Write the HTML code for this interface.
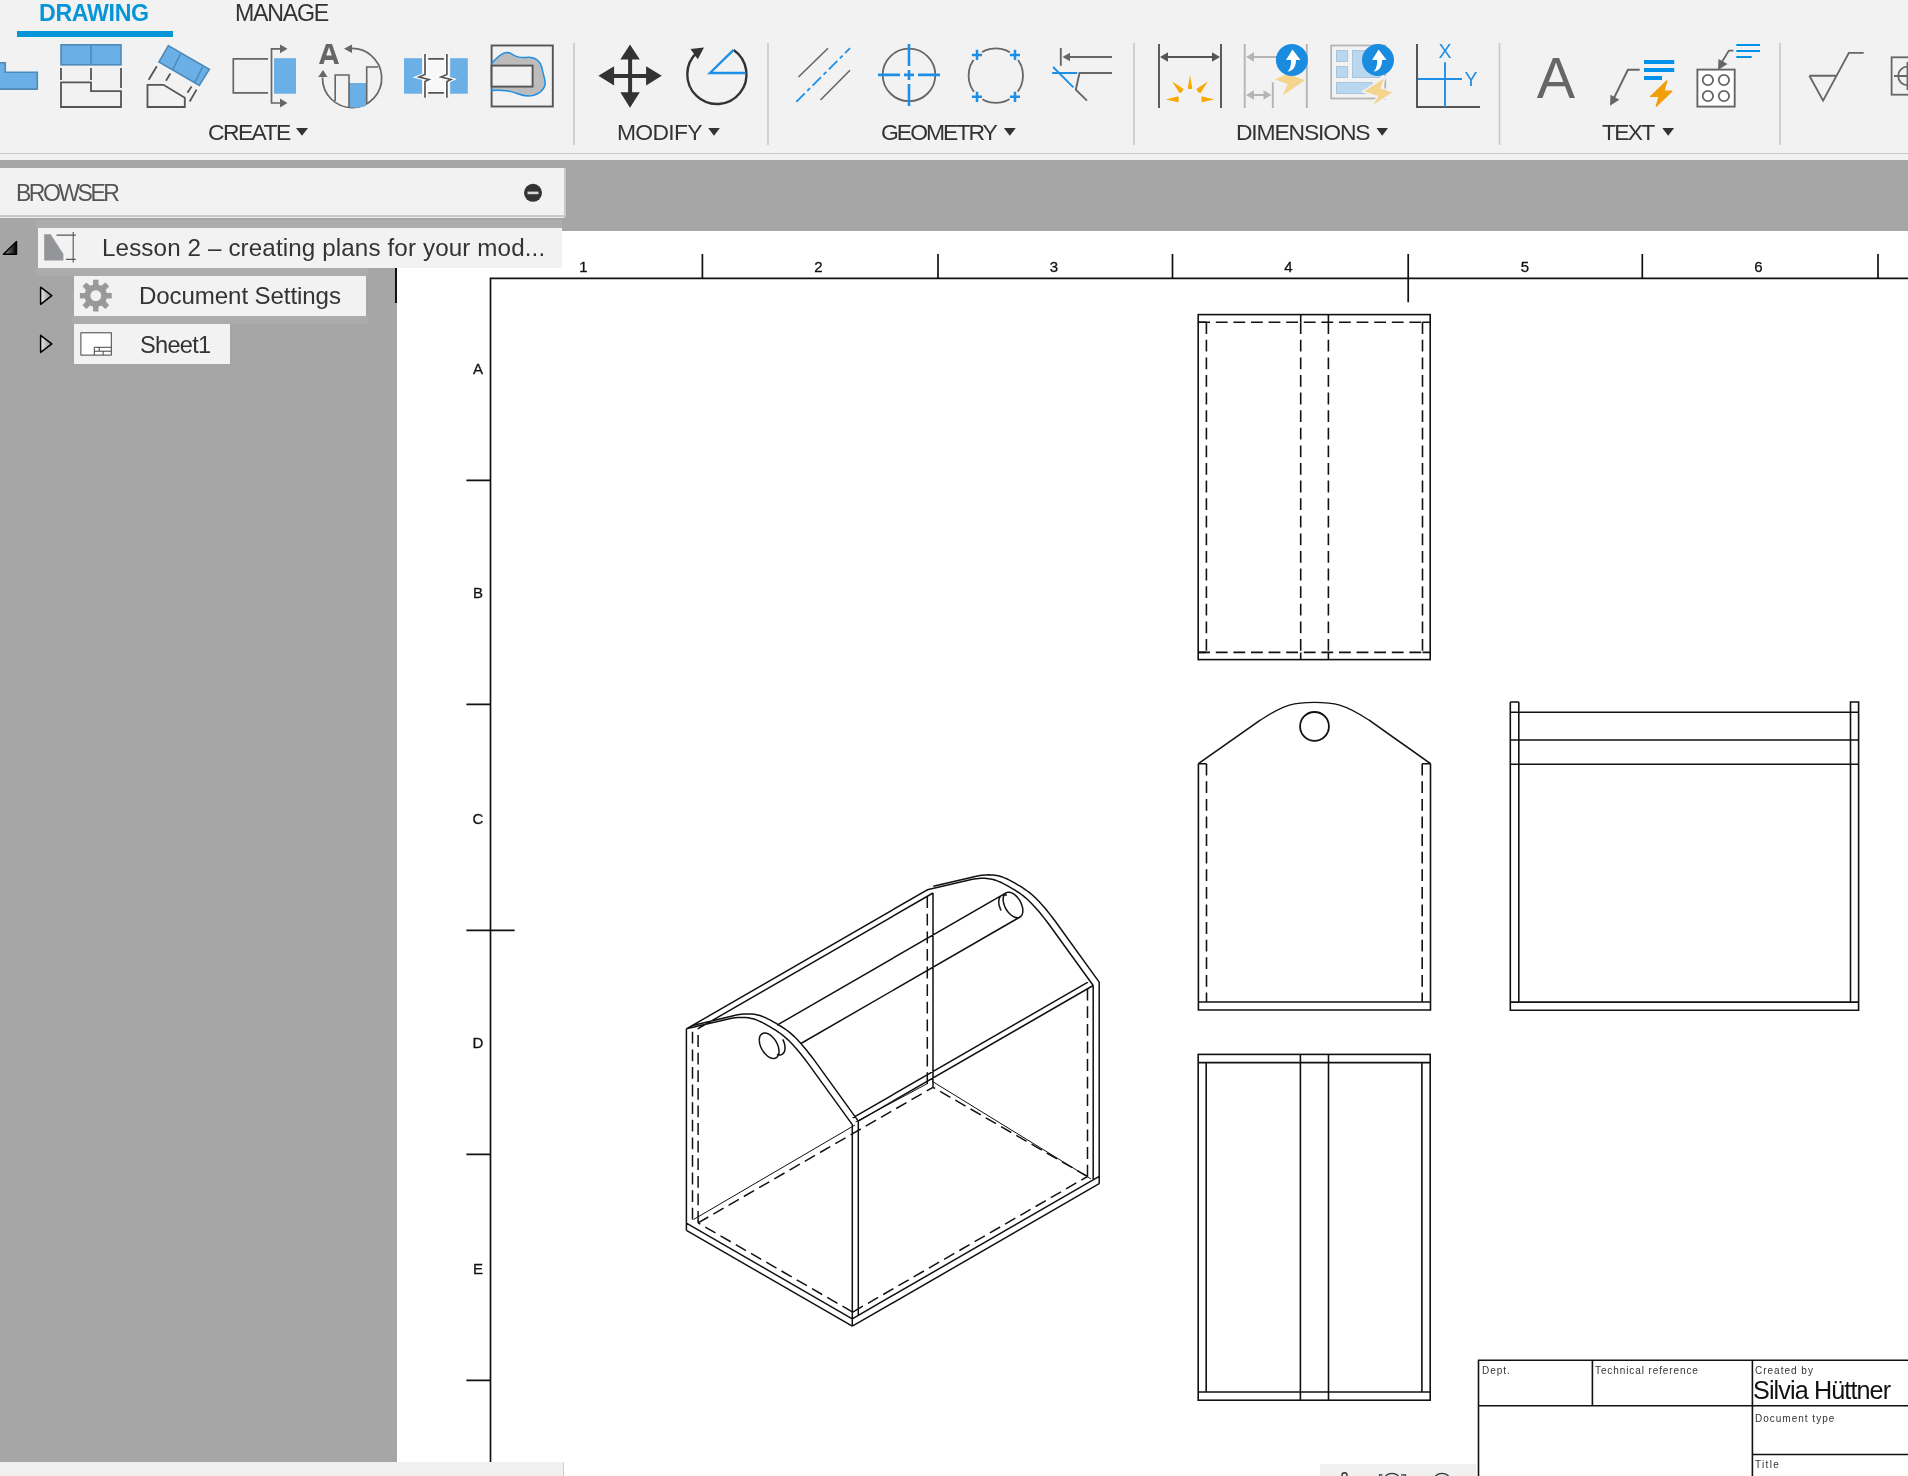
<!DOCTYPE html>
<html><head><meta charset="utf-8">
<style>
html,body{margin:0;padding:0;}
body{width:1908px;height:1476px;overflow:hidden;position:relative;background:#fff;font-family:"Liberation Sans",sans-serif;}
.a{position:absolute;}
.t{position:absolute;white-space:pre;line-height:1;will-change:transform;}
svg{position:absolute;left:0;top:0;overflow:visible;will-change:transform;}
</style></head><body>
<!-- toolbar -->
<div class="a" style="left:0;top:0;width:1908px;height:160px;background:#f2f2f2"></div>
<div class="a" style="left:0;top:153px;width:1908px;height:1.2px;background:#c8c8c8"></div>
<!-- gray band -->
<div class="a" style="left:0;top:160px;width:1908px;height:71px;background:#a6a6a6"></div>
<!-- left gray panel -->
<div class="a" style="left:0;top:231px;width:397px;height:1231px;background:#a6a6a6"></div>

<!-- DRAWING SVG -->
<svg id="dwg" width="1908" height="1476" viewBox="0 0 1908 1476">
 <g stroke="#111" stroke-width="1.7" fill="none">
  <!-- frame -->
  <path d="M490.5,1476 V278.3 H1908"/>
  <path d="M702.4,254 V278.3 M938,254 V278.3 M1172.5,254 V278.3 M1408.2,254 V302.3 M1642.3,254 V278.3 M1878,254 V278.3"/>
  <path d="M466.4,480.4 H490.5 M466.4,704.4 H490.5 M466.4,930.4 H514.6 M466.4,1154.4 H490.5 M466.4,1380.4 H490.5"/>
 </g>
 <g font-family="Liberation Sans" font-size="15" fill="#111" text-anchor="middle" stroke="#111" stroke-width="0.3">
  <text x="583.5" y="271.6">1</text><text x="818.5" y="271.6">2</text><text x="1054" y="271.6">3</text><text x="1288.5" y="271.6">4</text><text x="1525" y="271.6">5</text><text x="1758.5" y="271.6">6</text>
  <text x="478" y="373.6">A</text><text x="478" y="597.6">B</text><text x="478" y="823.6">C</text><text x="478" y="1047.6">D</text><text x="478" y="1273.6">E</text>
 </g>
 <g stroke="#111" stroke-width="1.6" fill="none">
  <!-- view 1 top -->
  <rect x="1198.2" y="314.6" width="232" height="345"/>
  <path d="M1198.2,322.2 H1206.4 M1422.5,322.2 H1430.2 M1198.2,652.4 H1206.4 M1422.5,652.4 H1430.2 M1300.7,314.6 V322.2 M1328.4,314.6 V322.2 M1300.7,652.4 V659.6 M1328.4,652.4 V659.6"/>
  <path d="M1198.2,322.2 H1422.5 M1198.2,652.4 H1422.5 M1206.4,322.2 V652.4 M1422.5,322.2 V652.4 M1300.7,322.2 V652.4 M1328.4,322.2 V652.4" stroke-dasharray="11.8,5.8"/>
  <!-- view 2 front -->
  <path d="M1198.4,763.7 V1010 H1430.5 V763.7 M1198.4,1002 H1430.5 M1198.4,763.7 H1206.5 M1422.2,763.7 H1430.5"/>
  <path d="M1198.4,763.7 L1260.6,719.9 M1368.8,719.9 L1430.5,763.7"/><path d="M1260.6,719.9 C1285,704 1295,702.3 1314.5,702.3 C1334,702.3 1344,704 1368.8,719.9" stroke-width="1.2"/>
  <path d="M1206.5,763.7 V1002 M1422.2,763.7 V1002" stroke-dasharray="11.8,5.8"/>
  <circle cx="1314.5" cy="726.4" r="14.4" stroke-width="1.8"/>
  <!-- view 3 side -->
  <path d="M1510.3,702 V1010.2 H1858.6 V702 H1850.5 V1002 M1518.8,702 V1002 M1510.3,702 H1518.8 M1518.8,712.3 H1850.5 M1510.3,740 H1858.6 M1510.3,764.2 H1858.6 M1510.3,1002.1 H1858.6 M1510.3,712.3 H1518.8 M1850.5,712.3 H1858.6"/>
  <!-- view 4 bottom -->
  <rect x="1198.2" y="1054.4" width="232" height="345.8"/>
  <path d="M1198.2,1062.6 H1430.2 M1198.2,1392 H1430.2 M1206.2,1062.6 V1392 M1421.9,1062.6 V1392 M1300.4,1054.4 V1400.2 M1328.5,1054.4 V1400.2"/>
  <!-- title block -->
  <path d="M1478.5,1476 V1360.3 H1908 M1478.5,1405.8 H1908 M1592.4,1360.3 V1405.8 M1752.4,1360.3 V1476 M1752.4,1454.5 H1908"/>
 </g>
 <g font-family="Liberation Sans" font-size="10" fill="#333">
  <text x="1482" y="1374" letter-spacing="1.0">Dept.</text>
  <text x="1595" y="1374" letter-spacing="0.9">Technical reference</text>
  <text x="1755" y="1374" letter-spacing="1.0">Created by</text>
  <text x="1755" y="1422" letter-spacing="1.0">Document type</text>
  <text x="1755" y="1468" letter-spacing="1.3">Title</text>
 </g>
 <text x="1753" y="1399.4" font-family="Liberation Sans" font-size="25.2" letter-spacing="-0.9" fill="#111">Silvia Hüttner</text>
 <g id="iso" stroke="#111" stroke-width="1.5" fill="none">
<path stroke-width="1" d="M855.6,1122 L927,1083.8 M932,1081.2 L1090.8,1178.8 M693.5,1219.5 L855,1125"/>
<path d="M852.3,1326.2L686.4,1230.4M852.3,1326.2L1099.2,1183.7M852.3,1318.8L686.4,1223.1M852.3,1318.8L1099.2,1176.3M686.4,1230.4L686.4,1028.8M852.3,1326.2L852.3,1124.6M1099.2,1183.7L1099.2,982.1M858.3,1315.4L858.3,1121.1M1093.2,1179.8L1093.2,985.5M852.3,1124.6L807.8,1063.1L805.3,1059.7L802.9,1056.7L800.6,1053.8L798.5,1051.2L796.4,1048.7L794.4,1046.5L792.6,1044.4L790.7,1042.5L789.0,1040.8L787.2,1039.1L785.5,1037.6L783.9,1036.2L782.2,1034.8L780.5,1033.5L778.7,1032.3L777.0,1031.1L775.2,1029.9L773.3,1028.8L771.3,1027.6L769.3,1026.4L767.3,1025.3L765.3,1024.2L763.4,1023.2L761.6,1022.2L759.8,1021.4L758.1,1020.6L756.4,1019.9L754.7,1019.3L753.0,1018.8L751.3,1018.4L749.6,1018.0L747.8,1017.7L745.9,1017.5L744.0,1017.4L742.1,1017.4L740.0,1017.4L737.8,1017.5L735.5,1017.7L733.1,1018.0L730.5,1018.4L686.4,1028.8M858.3,1121.1L813.9,1059.6L811.3,1056.3L808.9,1053.2L806.6,1050.3L804.5,1047.7L802.4,1045.3L800.5,1043.0L798.6,1041.0L796.8,1039.0L795.0,1037.3L793.3,1035.6L791.6,1034.1L789.9,1032.7L788.2,1031.3L786.5,1030.0L784.8,1028.8L783.0,1027.6L781.2,1026.5L779.3,1025.3L777.4,1024.1L775.3,1022.9L773.3,1021.8L771.3,1020.7L769.4,1019.7L767.6,1018.8L765.9,1017.9L764.1,1017.1L762.4,1016.5L760.7,1015.8L759.0,1015.3L757.3,1014.9L755.6,1014.5L753.8,1014.2L752.0,1014.0L750.1,1013.9L748.1,1013.9L746.0,1013.9L743.8,1014.1L741.5,1014.3L739.1,1014.6L736.5,1014.9L692.5,1025.4M1093.2,985.5L1048.7,924.0L1046.2,920.7L1043.8,917.6L1041.5,914.7L1039.3,912.1L1037.3,909.7L1035.3,907.4L1033.4,905.4L1031.6,903.5L1029.8,901.7L1028.1,900.0L1026.4,898.5L1024.7,897.1L1023.0,895.7L1021.3,894.5L1019.6,893.2L1017.8,892.0L1016.0,890.9L1014.2,889.7L1012.2,888.6L1010.2,887.4L1008.1,886.2L1006.2,885.1L1004.3,884.1L1002.5,883.2L1000.7,882.3L999.0,881.6L997.3,880.9L995.6,880.3L993.9,879.7L992.2,879.3L990.4,878.9L988.6,878.7L986.8,878.5L984.9,878.3L982.9,878.3L980.8,878.3L978.7,878.5L976.4,878.7L973.9,879.0L971.3,879.4L927.3,889.8M1099.2,982.1L1054.7,920.5L1052.2,917.2L1049.8,914.1L1047.5,911.3L1045.4,908.6L1043.3,906.2L1041.3,904.0L1039.5,901.9L1037.6,900.0L1035.9,898.2L1034.1,896.6L1032.4,895.0L1030.7,893.6L1029.1,892.3L1027.4,891.0L1025.6,889.8L1023.9,888.6L1022.1,887.4L1020.2,886.2L1018.2,885.1L1016.2,883.9L1014.1,882.7L1012.2,881.6L1010.3,880.6L1008.5,879.7L1006.7,878.8L1005.0,878.1L1003.3,877.4L1001.6,876.8L999.9,876.3L998.2,875.8L996.5,875.5L994.7,875.2L992.8,875.0L990.9,874.9L988.9,874.8L986.9,874.9L984.7,875.0L982.4,875.2L979.9,875.5L977.4,875.9L933.3,886.3M858.3,1121.1L1093.2,985.5M852.7,1117.9L1087.5,982.3M686.4,1028.8L927.3,889.8M698.1,1028.6L933.0,893.0M933.0,1087.3L933.0,893.0M759.3,1040.1L759.4,1038.6L759.6,1037.3L760.0,1036.1L760.6,1035.1L761.3,1034.3L762.2,1033.7L763.2,1033.3L764.2,1033.0L765.4,1033.1L766.6,1033.3L767.9,1033.7L769.2,1034.4L770.4,1035.2L771.7,1036.2L772.9,1037.4L774.1,1038.7L775.1,1040.2L776.1,1041.7L777.0,1043.3L777.7,1045.0L778.3,1046.6L778.7,1048.3L778.9,1049.9L779.0,1051.4L778.9,1052.9L778.7,1054.2L778.3,1055.3L777.7,1056.4L777.0,1057.2L776.1,1057.8L775.1,1058.2L774.1,1058.4L772.9,1058.4L771.7,1058.2L770.4,1057.8L769.2,1057.1L767.9,1056.3L766.6,1055.3L765.4,1054.1L764.2,1052.7L763.2,1051.3L762.2,1049.8L761.3,1048.2L760.6,1046.5L760.0,1044.8L759.6,1043.2L759.4,1041.6L759.3,1040.1M782.7,1039.3L783.5,1040.9L784.1,1042.6L784.6,1044.3L784.9,1045.9L785.0,1047.4L785.0,1048.9L784.8,1050.3L784.4,1051.5L783.9,1052.6L783.2,1053.4L782.4,1054.1L781.5,1054.6L780.5,1054.9L779.3,1055.0L778.1,1054.8L776.9,1054.5M1001.1,910.5L1000.3,908.8L999.7,907.1L999.2,905.5L998.9,903.9L998.8,902.3L998.8,900.8L999.0,899.5L999.3,898.3L999.9,897.2L1000.5,896.3L1001.3,895.6L1002.3,895.1L1003.3,894.8L1004.4,894.8L1005.6,894.9L1006.9,895.3M1003.1,899.3L1003.2,897.8L1003.5,896.5L1003.9,895.3L1004.5,894.3L1005.2,893.5L1006.0,892.9L1007.0,892.5L1008.1,892.3L1009.2,892.3L1010.4,892.5L1011.7,892.9L1013.0,893.6L1014.3,894.4L1015.5,895.4L1016.8,896.6L1017.9,897.9L1019.0,899.4L1020.0,900.9L1020.8,902.5L1021.5,904.2L1022.1,905.9L1022.5,907.5L1022.8,909.1L1022.8,910.6L1022.8,912.1L1022.5,913.4L1022.1,914.6L1021.5,915.6L1020.8,916.4L1020.0,917.0L1019.0,917.4L1017.9,917.7L1016.8,917.6L1015.5,917.4L1014.3,917.0L1013.0,916.3L1011.7,915.5L1010.4,914.5L1009.2,913.3L1008.1,912.0L1007.0,910.5L1006.0,909.0L1005.2,907.4L1004.5,905.7L1003.9,904.1L1003.5,902.4L1003.2,900.8L1003.1,899.3M777.1,1025.1L1006.0,892.9M800.9,1043.5L1020.0,917.0"/>
<path stroke-dasharray="11.8,5.8" d="M927.3,1084.0L927.3,889.8M692.5,1219.6L692.5,1025.4M698.1,1222.9L698.1,1028.6M1087.5,1176.5L1087.5,982.3M852.7,1312.1L1087.5,1176.5M852.7,1312.1L698.1,1222.9M1087.5,1176.5L933.0,1087.3M698.1,1222.9L933.0,1087.3"/>
</g>
</svg>

<!-- browser header -->
<div class="a" style="left:0;top:168px;width:564px;height:47px;background:#f2f2f2;border-right:2px solid #c8c8c8;border-bottom:2px solid #c8c8c8"></div>
<div class="a" style="left:0;top:217px;width:564px;height:1px;background:#ececec"></div>
<div class="a" style="left:36px;top:219.5px;width:526px;height:8.5px;background:#adadad"></div>

<!-- browser rows -->
<div class="a" style="left:36px;top:267.7px;width:332px;height:8.3px;background:#acacac"></div>
<div class="a" style="left:72px;top:315.6px;width:296px;height:8.6px;background:#acacac"></div>
<div class="a" style="left:38px;top:228px;width:524px;height:39.7px;background:#f2f2f2"></div>
<div class="a" style="left:73.7px;top:276px;width:292px;height:39.6px;background:#f2f2f2"></div>
<div class="a" style="left:73.7px;top:324.2px;width:156px;height:39.8px;background:#f2f2f2"></div>
<div class="a" style="left:395.2px;top:268px;width:1.8px;height:35px;background:#111"></div>
<svg width="600" height="400" viewBox="0 0 600 400">
 <defs>
  <linearGradient id="gTri" x1="0" x2="1" y1="0" y2="0"><stop offset="0" stop-color="#9a9a9a"/><stop offset="1" stop-color="#000"/></linearGradient>
  <linearGradient id="gExp" x1="0" x2="1" y1="0" y2="0"><stop offset="0" stop-color="#e8e8e8"/><stop offset="1" stop-color="#8a8a8a"/></linearGradient>
 </defs>
 <circle cx="533" cy="192.8" r="9" fill="#333"/>
 <rect x="527.5" y="191.6" width="11" height="2.6" fill="#d8d8d8"/>
 <path d="M3.4,254.3 L16.5,241.5 L16.5,254.3 Z" fill="url(#gTri)" stroke="#000" stroke-width="1.4" stroke-linejoin="round"/>
 <path d="M44.2,234.3 L50.6,234.3 L63.4,254 L63.4,260.4 L44.2,260.4 Z" fill="#939598"/>
 <path d="M56.5,235.1 H75.8 M66,259.4 H75.8 M73.2,232 V262.5" stroke="#555" stroke-width="1.1" fill="none"/>
 <path d="M40.6,287.2 L51.8,295.6 L40.6,304.3 Z" fill="url(#gExp)" stroke="#000" stroke-width="1.5" stroke-linejoin="round"/>
 <path d="M40.6,335.3 L51.8,343.8 L40.6,352.4 Z" fill="url(#gExp)" stroke="#000" stroke-width="1.5" stroke-linejoin="round"/>
 <g transform="translate(95.8,295.7)" fill="#999">
  <path id="gear" d="M-2.7,-15.9 H2.7 V-11 L5.6,-9.9 L9.5,-13.3 L13.3,-9.5 L9.9,-5.6 L11,-2.7 H15.9 V2.7 H11 L9.9,5.6 L13.3,9.5 L9.5,13.3 L5.6,9.9 L2.7,11 V15.9 H-2.7 V11 L-5.6,9.9 L-9.5,13.3 L-13.3,9.5 L-9.9,5.6 L-11,2.7 H-15.9 V-2.7 H-11 L-9.9,-5.6 L-13.3,-9.5 L-9.5,-13.3 L-5.6,-9.9 L-2.7,-11 Z M0,-5.4 A5.4,5.4 0 1,0 0.01,-5.4 Z" fill-rule="evenodd"/>
 </g>
 <rect x="80.9" y="332.8" width="30.4" height="22.3" fill="#fff" stroke="#444" stroke-width="1"/>
 <path d="M94.3,355.1 V347.3 H111.3 M94.3,351.2 H111.3 M99.2,347.3 V351.2 M103.1,351.2 V355.1" stroke="#444" stroke-width="1" fill="none"/>
</svg>
<!-- toolbar icons -->
<svg width="1908" height="160" viewBox="0 0 1908 160">
 <g stroke-linecap="butt" fill="none">
 <!-- separators -->
 <path d="M574,43 V145 M768,43 V145 M1134,43 V145 M1499.5,43 V145 M1780,43 V145" stroke="#c8c8c8" stroke-width="1.6"/>
 <!-- icon1 partial L -->
 <path d="M-2,62.8 H5.3 V72.2 H37.3 V89.1 H-2 Z" fill="#6aafe6" stroke="#4d8ab8" stroke-width="1.6"/>
 <!-- icon2 base view -->
 <rect x="61" y="44.8" width="60" height="20" fill="#6aafe6" stroke="#4d8ab8" stroke-width="1.6"/>
 <path d="M91,44.8 V64.8" stroke="#4d8ab8" stroke-width="1.6"/>
 <path d="M61,68 V80 M91,68 V80 M121,68 V88" stroke="#555" stroke-width="1.8"/>
 <path d="M61,82.4 H91 V91.2 H121 V107 H61 Z" stroke="#555" stroke-width="1.8"/>
 <!-- icon3 projected view -->
 <path d="M168.4,45.6 L209.3,69.4 L199.3,85.4 L158.9,62 Z" fill="#6aafe6" stroke="#4d8ab8" stroke-width="1.6"/>
 <path d="M180.4,54.2 L172.8,69.5 M202.6,66.8 L194.8,82.6" stroke="#4d8ab8" stroke-width="1.5"/>
 <path d="M156.8,66.2 L148.7,79.8 M170.4,73.5 L166,80.7 M191.6,86.5 L187.4,92.7 M196.6,89.6 L189.7,101.5" stroke="#555" stroke-width="1.8"/>
 <path d="M147.5,84.8 H163.5 L184.8,97.8 V107 H147.5 Z" stroke="#555" stroke-width="1.8"/>
 <!-- icon4 section view -->
 <path d="M268,58.8 H233.3 V92.8 H268" stroke="#666" stroke-width="1.7"/>
 <path d="M281,48.8 H271.5 V103 H281" stroke="#666" stroke-width="1.7"/>
 <path d="M280,44.4 L287.5,48.8 L280,53.2 Z M280,98.6 L287.5,103 L280,107.4 Z" fill="#666"/>
 <rect x="274" y="58.2" width="22" height="35.5" fill="#6aafe6"/>
 <!-- icon5 detail view -->
 <path d="M319,64 L326,44 H332 L339,64 H334.5 L333.2,60 H324.8 L323.5,64 Z M326.2,55.6 H331.8 L329,47 Z" fill="#666" fill-rule="evenodd"/>
 <path d="M322.5,77.5 A29.6,29.6 0 1,0 349.2,48.6" stroke="#666" stroke-width="1.7"/>
 <path d="M344,48.7 L352,44.5 V53 Z" fill="#666"/>
 <path d="M318.2,77 L323,70 L327.5,77 Z" fill="#666"/>
 <path d="M349,100 V83 H366 V106 Q357,109 349,107 Z" fill="#6aafe6"/>
 <path d="M335.2,101 V75 H349 V107.5 M366.7,104 V67 H378" stroke="#666" stroke-width="1.6"/>
 <!-- icon6 break view -->
 <rect x="404" y="58.2" width="18" height="35.5" fill="#6aafe6"/>
 <rect x="450.2" y="58.2" width="17.6" height="35.5" fill="#6aafe6"/>
 <rect x="425" y="58.2" width="22" height="35.5" fill="#f8f8f8"/>
 <path d="M425,54 V74.5 L419,77 L429,79.5 L425,81.5 V97.8 M446.9,54 V74.5 L441,77 L451,79.5 L446.9,81.5 V97.8" stroke="#fff" stroke-width="4"/>
 <path d="M425,54 V74.5 L419,77 L429,79.5 L425,81.5 V97.8 M446.9,54 V74.5 L441,77 L451,79.5 L446.9,81.5 V97.8" stroke="#555" stroke-width="1.7"/>
 <path d="M428.2,58.8 H443.9 M428.2,92.9 H443.9" stroke="#555" stroke-width="1.7"/>
 <!-- icon7 crop -->
 <rect x="491.6" y="45.5" width="61.2" height="61" stroke="#555" stroke-width="1.9"/>
 <path d="M492,63 C500,54 506,51 510,53 C515,56 518,58 526,57.5 C534,56.5 540,60 542,68 C543,75 546,80 545,85 C543,92 536,96 528,96 C520,96 516,92 508,91 C502,90 497,90 492,90.5 Z" fill="#bcbcbc" stroke="#1e8fe6" stroke-width="1.5"/>
 <rect x="491.6" y="65.6" width="41" height="21" fill="#f2f2f2" stroke="#555" stroke-width="1.9"/>
 <!-- move -->
 <path d="M630,44.5 L639.8,59.6 H632.1 V73.9 H646.1 V66.2 L661.8,75.8 L646.1,85.6 V77.9 H632.1 V92.2 H639.8 L630,107.8 L620.3,92.2 H628.1 V77.9 H614.1 V85.6 L598.4,75.8 L614.1,66.2 V73.9 H628.1 V59.6 H620.3 Z" fill="#333"/>
 <!-- rotate -->
 <path d="M733.6,50 A29.6,29.6 0 1,1 697,52.5" stroke="#333" stroke-width="2.4"/>
 <path d="M690.5,49 L704,47.5 L697.8,59.3 Z" fill="#333"/>
 <path d="M745.6,73 H710 L733.6,49.8" stroke="#1e8fe6" stroke-width="2.4"/>
 <!-- centerline -->
 <path d="M798.5,77 L828,48.3 M820.5,100 L850,70.2" stroke="#666" stroke-width="1.6"/>
 <path d="M796.3,101.8 L850,48.2" stroke="#1e8fe6" stroke-width="1.8" stroke-dasharray="12,3.5,4,3.5"/>
 <!-- center mark -->
 <circle cx="909" cy="74.9" r="26.3" stroke="#666" stroke-width="1.8"/>
 <path d="M878,74.9 H900 M904,74.9 H914 M918,74.9 H940 M909,44 V66 M909,70 V80 M909,84 V106" stroke="#1e8fe6" stroke-width="2.6"/>
 <!-- bolt circle -->
 <circle cx="995.8" cy="75.6" r="27.2" stroke="#666" stroke-width="1.8"/>
 <g fill="#f2f2f2" stroke="none"><circle cx="977" cy="54.9" r="6"/><circle cx="1015" cy="54.9" r="6"/><circle cx="977" cy="96.8" r="6"/><circle cx="1015" cy="96.8" r="6"/></g>
 <path d="M971.9,54.9 H982 M977,49.8 V60 M1009.9,54.9 H1020 M1015,49.8 V60 M971.9,96.8 H982 M977,91.7 V101.9 M1009.9,96.8 H1020 M1015,91.7 V101.9" stroke="#1e8fe6" stroke-width="2.5"/>
 <!-- edge extension -->
 <path d="M1060.8,48 V65.7 M1066,57 H1112 M1112,73 H1079.5 L1075.8,89.8 L1087,100.6" stroke="#666" stroke-width="1.9"/>
 <path d="M1062.5,57 L1070,52.8 V61.2 Z" fill="#666"/>
 <path d="M1052.2,73 H1077.2 M1053.1,67 L1073.4,87.4" stroke="#1e8fe6" stroke-width="1.9"/>
 <!-- dimension -->
 <path d="M1159,44 V108 M1221,44 V108 M1166,57 H1214" stroke="#555" stroke-width="1.9"/>
 <path d="M1160,57 L1168,52.3 V61.7 Z M1220,57 L1212,52.3 V61.7 Z" fill="#555"/>
 <g fill="#f9a800">
  <path d="M1190,75.2 L1192.3,88.5 Q1190,89.5 1187.7,88.5 Z"/>
  <path d="M1172.2,81.5 L1183.6,89 Q1182.5,92.3 1179.6,93.3 Z"/>
  <path d="M1207.8,81.5 L1196.4,89 Q1197.5,92.3 1200.4,93.3 Z"/>
  <path d="M1165.8,99.4 L1178.4,96.3 Q1179,99.4 1178.4,102.2 Z"/>
  <path d="M1214.2,99.4 L1201.6,96.3 Q1201,99.4 1201.6,102.2 Z"/>
 </g>
 <!-- auto dimension -->
 <path d="M1244.7,44 V108 M1306.8,44 V108 M1272.8,82.2 V108 M1250,57 H1280 M1250,95 H1268" stroke="#b4b4b4" stroke-width="1.9"/>
 <path d="M1246,57 L1254,52.3 V61.7 Z M1246,95 L1254,90.3 V99.7 Z M1271.5,95 L1263.5,90.3 V99.7 Z" fill="#b4b4b4"/>
 <path d="M1274.9,79.6 L1287.2,73.7 L1305,80.3 L1282.5,95.4 L1287.6,84.1 Z" fill="#f5d48d"/>
 <circle cx="1291.9" cy="60" r="16" fill="#1a8ce0"/>
 <path d="M1292.5,49.5 L1300.5,60 H1296 C1296,67 1293,71 1287.5,71.5 C1290.5,69 1291,65 1291,60 H1286 Z" fill="#fff"/>
 <!-- baseline dim -->
 <rect x="1331.2" y="45.5" width="54" height="53" stroke="#b4b4b4" stroke-width="1.8"/>
 <g fill="#b9d7ee" stroke="#a9c7de" stroke-width="1"><rect x="1336.5" y="50.5" width="11" height="11"/><rect x="1336.5" y="66.5" width="11" height="11"/><rect x="1352.5" y="50.5" width="27.5" height="27"/><rect x="1336.5" y="82.5" width="35.5" height="11"/></g>
 <path d="M1362.5,91.7 L1385.6,76.6 L1381.3,87.9 L1393.6,92.4 L1370.5,107.5 L1377.5,96.4 Z" fill="#f5d48d" stroke="#f2f2f2" stroke-width="1.5"/>
 <circle cx="1378" cy="60" r="16" fill="#1a8ce0"/>
 <path d="M1378.6,49.5 L1386.6,60 H1382.1 C1382.1,67 1379.1,71 1373.6,71.5 C1376.6,69 1377.1,65 1377.1,60 H1372.1 Z" fill="#fff"/>
 <!-- ordinate -->
 <path d="M1417,44 V107 H1480" stroke="#555" stroke-width="2"/>
 <path d="M1445,62.2 V107 M1418,79 H1462" stroke="#1e8fe6" stroke-width="1.9"/>
 <!-- text A -->
 <!-- leader note -->
 <path d="M1639.7,69.8 H1627.9 L1613,100" stroke="#666" stroke-width="1.9"/>
 <path d="M1610,105.8 L1610.5,94.8 L1619.3,99.8 Z" fill="#666"/>
 <path d="M1644,62 H1674.2 M1644,70 H1674.2 M1644,78 H1662" stroke="#0091ea" stroke-width="3.8"/>
 <path d="M1667,80.8 L1650.6,96.4 H1659 L1656.2,106.3 L1671.8,91.2 H1663.8 Z" fill="#f29e0a" stroke="#f29e0a" stroke-width="1.2" stroke-linejoin="round"/>
 <!-- balloon -->
 <rect x="1697.4" y="69.6" width="37.3" height="37" fill="#fff" stroke="#666" stroke-width="1.9"/>
 <g stroke="#666" stroke-width="1.8"><circle cx="1707.9" cy="80" r="5.2"/><circle cx="1723.9" cy="80" r="5.2"/><circle cx="1707.9" cy="96" r="5.2"/><circle cx="1723.9" cy="96" r="5.2"/></g>
 <path d="M1733.4,50.6 H1728.9 L1721,63.5" stroke="#666" stroke-width="1.8"/>
 <path d="M1718,70 L1718.5,59 L1727.5,64 Z" fill="#666"/>
 <path d="M1736.3,44.9 H1760 M1736.3,50.9 H1760 M1736.3,56.9 H1751.7" stroke="#0091ea" stroke-width="2"/>
 <!-- surface texture -->
 <path d="M1809.4,75.8 H1835.7 M1809.4,75.8 L1823.1,100.6 L1848.9,52.9 H1863.7" stroke="#666" stroke-width="1.9"/>
 <!-- partial icon -->
 <rect x="1891.6" y="57.3" width="30" height="37.4" stroke="#666" stroke-width="1.8"/>
 <circle cx="1907.5" cy="76" r="9.3" stroke="#666" stroke-width="1.8"/>
 <path d="M1894,76 H1920 M1907.5,62 V90" stroke="#666" stroke-width="1.8"/>
 </g>
 <!-- X Y letters -->
 <text x="1445" y="58.2" font-family="Liberation Sans" font-size="19.5" fill="#1e8fe6" text-anchor="middle">X</text>
 <text x="1471" y="86" font-family="Liberation Sans" font-size="19.5" fill="#1e8fe6" text-anchor="middle">Y</text>
 <text x="1556" y="97.8" font-family="Liberation Sans" font-size="57.5" fill="#666" text-anchor="middle">A</text>
 <!-- dropdown triangles -->
 <path d="M296,128 H308 L302,135.7 Z M708.2,128 H719.9 L714,135.7 Z M1003.9,128 H1015.8 L1009.8,135.7 Z M1376.5,128 H1388 L1382.2,135.7 Z M1662.3,128 H1674.1 L1668.2,135.7 Z" fill="#333"/>
</svg>
<!-- tabs -->
<div class="t" style="left:39px;top:1.8px;font-size:23.2px;letter-spacing:-0.33px;font-weight:700;color:#0696d7">DRAWING</div>
<div class="a" style="left:17px;top:31px;width:156px;height:6px;background:#0696d7"></div>
<div class="t" style="left:235px;top:1.8px;font-size:23.2px;letter-spacing:-1.26px;color:#333">MANAGE</div>
<!-- group labels -->
<div class="t" style="left:207.7px;top:121px;font-size:22.9px;letter-spacing:-1.58px;color:#333">CREATE</div>
<div class="t" style="left:616.5px;top:121px;font-size:22.9px;letter-spacing:-0.7px;color:#333">MODIFY</div>
<div class="t" style="left:880.7px;top:121px;font-size:22.9px;letter-spacing:-1.96px;color:#333">GEOMETRY</div>
<div class="t" style="left:1236.1px;top:121px;font-size:22.9px;letter-spacing:-1.16px;color:#333">DIMENSIONS</div>
<div class="t" style="left:1602.4px;top:121px;font-size:22.9px;letter-spacing:-1.73px;color:#333">TEXT</div>
<div class="t" style="left:16px;top:182px;font-size:23px;letter-spacing:-2.5px;color:#555">BROWSER</div>
<div class="t" style="left:102.4px;top:236.2px;font-size:24.2px;letter-spacing:0.12px;color:#333">Lesson 2 – creating plans for your mod...</div>
<div class="t" style="left:138.9px;top:284.4px;font-size:24.1px;letter-spacing:-0.1px;color:#333">Document Settings</div>
<div class="t" style="left:139.6px;top:333.5px;font-size:23.6px;letter-spacing:-0.72px;color:#333">Sheet1</div>
<!-- bottom strips -->
<div class="a" style="left:0;top:1461.6px;width:563px;height:15px;background:#f0f0f0;border-right:1.5px solid #d0d0d0"></div>
<div class="a" style="left:1320px;top:1464.2px;width:156px;height:12px;background:#f0f0f0"></div>
<svg width="1908" height="1476" viewBox="0 0 1908 1476">
 <g transform="translate(0,1.8)"><g fill="none" stroke="#333" stroke-width="1.4">
  <path d="M1334.5,1478 a2.5,2.5 0 0,1 5,0 M1342,1476 v-2.5 a2.5,2.5 0 0,1 5,0 v3 M1348.5,1478 a2.5,2.5 0 0,1 5,0"/>
  <path d="M1379.5,1476 v-3 h3 M1401,1473 h4.5 v3" stroke-width="1.2"/>
 </g>
 <path d="M1384,1478 a8,6.5 0 0,1 16,0 Z M1434,1478 a8,6.5 0 0,1 16,0 Z" fill="#dde8e8" stroke="#333" stroke-width="1.3"/></g>
</svg>
</body></html>
